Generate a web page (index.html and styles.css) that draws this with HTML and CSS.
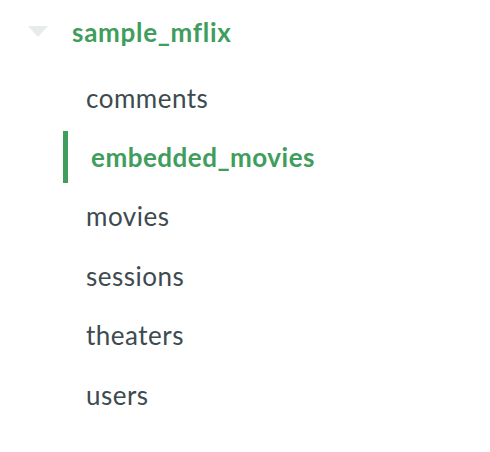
FILE: index.html
```html
<!DOCTYPE html>
<html>
<head>
<meta charset="utf-8">
<link rel="stylesheet" href="styles.css">
</head>
<body>
<div class="tree">
  <div class="db">
    <span class="caret"></span>
    <span class="db-name">sample_mflix</span>
  </div>
  <ul class="colls">
    <li class="coll">comments</li>
    <li class="coll active">embedded_movies</li>
    <li class="coll">movies</li>
    <li class="coll">sessions</li>
    <li class="coll">theaters</li>
    <li class="coll">users</li>
  </ul>
</div>
</body>
</html>
```
FILE: styles.css
```css
html, body {
  margin: 0;
  padding: 0;
  background: #ffffff;
}
body {
  font-family: Lato, "Open Sans", sans-serif;
}
.tree {
  padding-top: 10px;
}
.db {
  display: flex;
  align-items: center;
  height: 44px;
  padding-left: 28px;
}
.caret {
  width: 0;
  height: 0;
  border-left: 10px solid transparent;
  border-right: 10px solid transparent;
  border-top: 11px solid #e6ebeb;
  margin-right: 24px;
  margin-top: -2px;
}
.db-name {
  font-size: 26px;
  font-weight: 700;
  color: #3f9d5d;
  letter-spacing: 0.7px;
}
.colls {
  list-style: none;
  margin: 0;
  padding: 14px 0 0 63px;
}
.coll {
  height: 59.4px;
  display: flex;
  align-items: center;
  padding-left: 23px;
  font-size: 26px;
  color: #3d4a50;
  letter-spacing: 0.5px;
  box-sizing: border-box;
}
.coll.active {
  color: #3f9d5d;
  font-weight: 700;
  padding-left: 28px;
  position: relative;
}
.coll.active::before {
  content: "";
  position: absolute;
  left: 0;
  top: 4px;
  bottom: 4px;
  width: 5px;
  background: #3f9d5d;
}
```
